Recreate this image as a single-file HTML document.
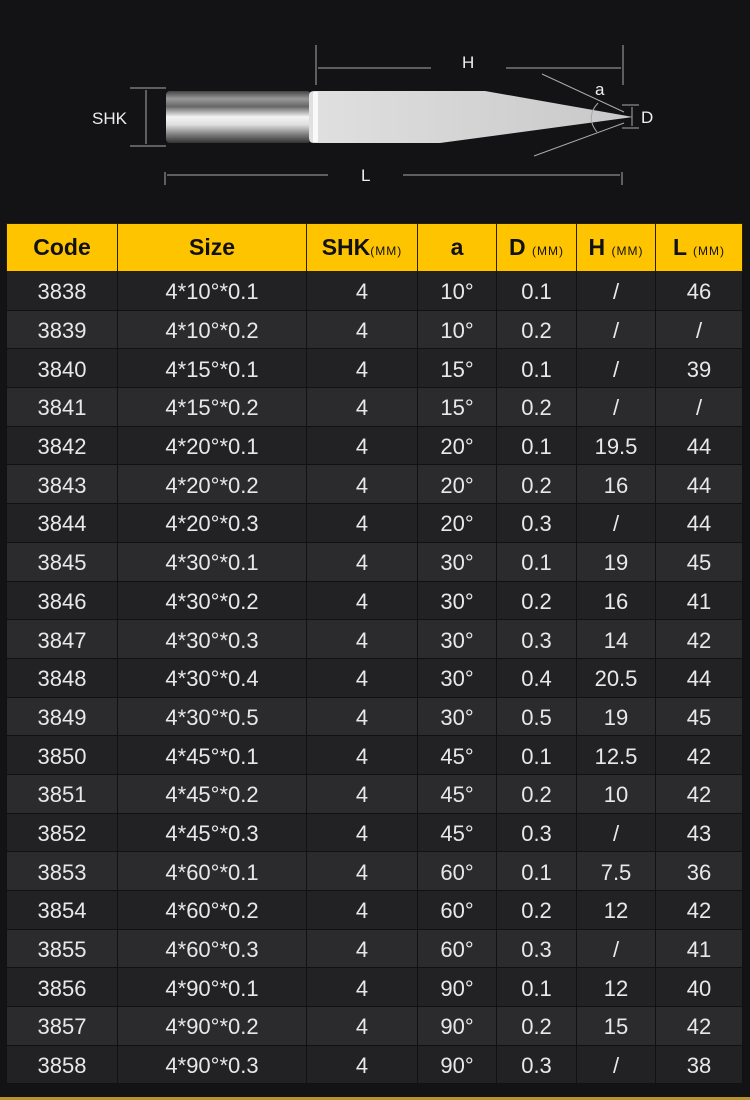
<!DOCTYPE html>
<html><head><meta charset="utf-8"><style>
body{margin:0;width:750px;height:1100px;background:#131316;overflow:hidden;font-family:"Liberation Sans",sans-serif}
svg{position:absolute;left:0;top:0}
table{position:absolute;left:6px;top:223px;width:736px;border-collapse:collapse;table-layout:fixed}
th{background:#fec400;color:#111;height:47px;font-size:23px;font-weight:bold;border:1px solid #2a2000;padding:0}
th small{font-size:12px;font-weight:normal;letter-spacing:1px}
td{height:34.7px;padding:3px 0 0 0;text-align:center;color:#e8e8e8;font-size:22px;border:1px solid #111;}
tr:nth-child(odd) td{background:#2b2b2e}
tr:nth-child(even) td{background:#222225}
.gold{position:absolute;left:0;top:1097px;width:750px;height:3px;background:#b8922a}
</style></head><body>
<svg width="750" height="222">
<defs>
<linearGradient id="sh" x1="0" y1="0" x2="0" y2="1">
<stop offset="0" stop-color="#444"/><stop offset=".15" stop-color="#999"/><stop offset=".3" stop-color="#666"/><stop offset=".5" stop-color="#f4f4f4"/><stop offset=".65" stop-color="#ddd"/><stop offset=".85" stop-color="#777"/><stop offset="1" stop-color="#333"/></linearGradient>
<linearGradient id="bd" x1="0" y1="0" x2="1" y2="0"><stop offset="0" stop-color="#e0e0e0"/><stop offset="1" stop-color="#c8c8c8"/></linearGradient>
</defs>
<rect x="166" y="91" width="145" height="52" rx="4" fill="url(#sh)"/>
<path d="M314 91 L485 91 L633 117 L440 143 L314 143 Q309 143 309 138 L309 96 Q309 91 314 91Z" fill="url(#bd)"/>
<rect x="313" y="92" width="5" height="50" fill="#fff" opacity=".8"/>
<g stroke="#aaa" stroke-width="1" fill="none">
<line x1="316" y1="45" x2="316" y2="85"/><line x1="623" y1="45" x2="623" y2="85"/>
<line x1="318" y1="68" x2="431" y2="68"/><line x1="506" y1="68" x2="621" y2="68"/>
<line x1="165" y1="172" x2="165" y2="185"/><line x1="622" y1="172" x2="622" y2="185"/>
<line x1="167" y1="175" x2="328" y2="175"/><line x1="403" y1="175" x2="620" y2="175"/>
<line x1="130" y1="88" x2="166" y2="88"/><line x1="130" y1="146" x2="166" y2="146"/>
<line x1="146" y1="90" x2="146" y2="144"/>
<line x1="542" y1="74" x2="624" y2="112"/><line x1="534" y1="156" x2="624" y2="123"/>
<path d="M598 103 Q585 117 597 132"/>
<line x1="622" y1="105" x2="639" y2="105"/><line x1="622" y1="128" x2="639" y2="128"/>
<line x1="632" y1="107" x2="632" y2="126"/>
</g>
<g fill="#eee" font-size="17" font-family="Liberation Sans">
<text x="462" y="68">H</text><text x="361" y="181">L</text><text x="92" y="124">SHK</text>
<text x="595" y="95">a</text><text x="641" y="123">D</text></g>
</svg>
<table>
<colgroup><col style="width:111px"><col style="width:189px"><col style="width:111px"><col style="width:79px"><col style="width:80px"><col style="width:79px"><col style="width:87px"></colgroup>
<tr><th>Code</th><th>Size</th><th>SHK<small>(MM)</small></th><th>a</th><th>D <small>(MM)</small></th><th>H <small>(MM)</small></th><th>L <small>(MM)</small></th></tr>
<tr><td>3838</td><td>4*10°*0.1</td><td>4</td><td>10°</td><td>0.1</td><td>/</td><td>46</td></tr>
<tr><td>3839</td><td>4*10°*0.2</td><td>4</td><td>10°</td><td>0.2</td><td>/</td><td>/</td></tr>
<tr><td>3840</td><td>4*15°*0.1</td><td>4</td><td>15°</td><td>0.1</td><td>/</td><td>39</td></tr>
<tr><td>3841</td><td>4*15°*0.2</td><td>4</td><td>15°</td><td>0.2</td><td>/</td><td>/</td></tr>
<tr><td>3842</td><td>4*20°*0.1</td><td>4</td><td>20°</td><td>0.1</td><td>19.5</td><td>44</td></tr>
<tr><td>3843</td><td>4*20°*0.2</td><td>4</td><td>20°</td><td>0.2</td><td>16</td><td>44</td></tr>
<tr><td>3844</td><td>4*20°*0.3</td><td>4</td><td>20°</td><td>0.3</td><td>/</td><td>44</td></tr>
<tr><td>3845</td><td>4*30°*0.1</td><td>4</td><td>30°</td><td>0.1</td><td>19</td><td>45</td></tr>
<tr><td>3846</td><td>4*30°*0.2</td><td>4</td><td>30°</td><td>0.2</td><td>16</td><td>41</td></tr>
<tr><td>3847</td><td>4*30°*0.3</td><td>4</td><td>30°</td><td>0.3</td><td>14</td><td>42</td></tr>
<tr><td>3848</td><td>4*30°*0.4</td><td>4</td><td>30°</td><td>0.4</td><td>20.5</td><td>44</td></tr>
<tr><td>3849</td><td>4*30°*0.5</td><td>4</td><td>30°</td><td>0.5</td><td>19</td><td>45</td></tr>
<tr><td>3850</td><td>4*45°*0.1</td><td>4</td><td>45°</td><td>0.1</td><td>12.5</td><td>42</td></tr>
<tr><td>3851</td><td>4*45°*0.2</td><td>4</td><td>45°</td><td>0.2</td><td>10</td><td>42</td></tr>
<tr><td>3852</td><td>4*45°*0.3</td><td>4</td><td>45°</td><td>0.3</td><td>/</td><td>43</td></tr>
<tr><td>3853</td><td>4*60°*0.1</td><td>4</td><td>60°</td><td>0.1</td><td>7.5</td><td>36</td></tr>
<tr><td>3854</td><td>4*60°*0.2</td><td>4</td><td>60°</td><td>0.2</td><td>12</td><td>42</td></tr>
<tr><td>3855</td><td>4*60°*0.3</td><td>4</td><td>60°</td><td>0.3</td><td>/</td><td>41</td></tr>
<tr><td>3856</td><td>4*90°*0.1</td><td>4</td><td>90°</td><td>0.1</td><td>12</td><td>40</td></tr>
<tr><td>3857</td><td>4*90°*0.2</td><td>4</td><td>90°</td><td>0.2</td><td>15</td><td>42</td></tr>
<tr><td>3858</td><td>4*90°*0.3</td><td>4</td><td>90°</td><td>0.3</td><td>/</td><td>38</td></tr>
</table>
<div class="gold"></div>
</body></html>
